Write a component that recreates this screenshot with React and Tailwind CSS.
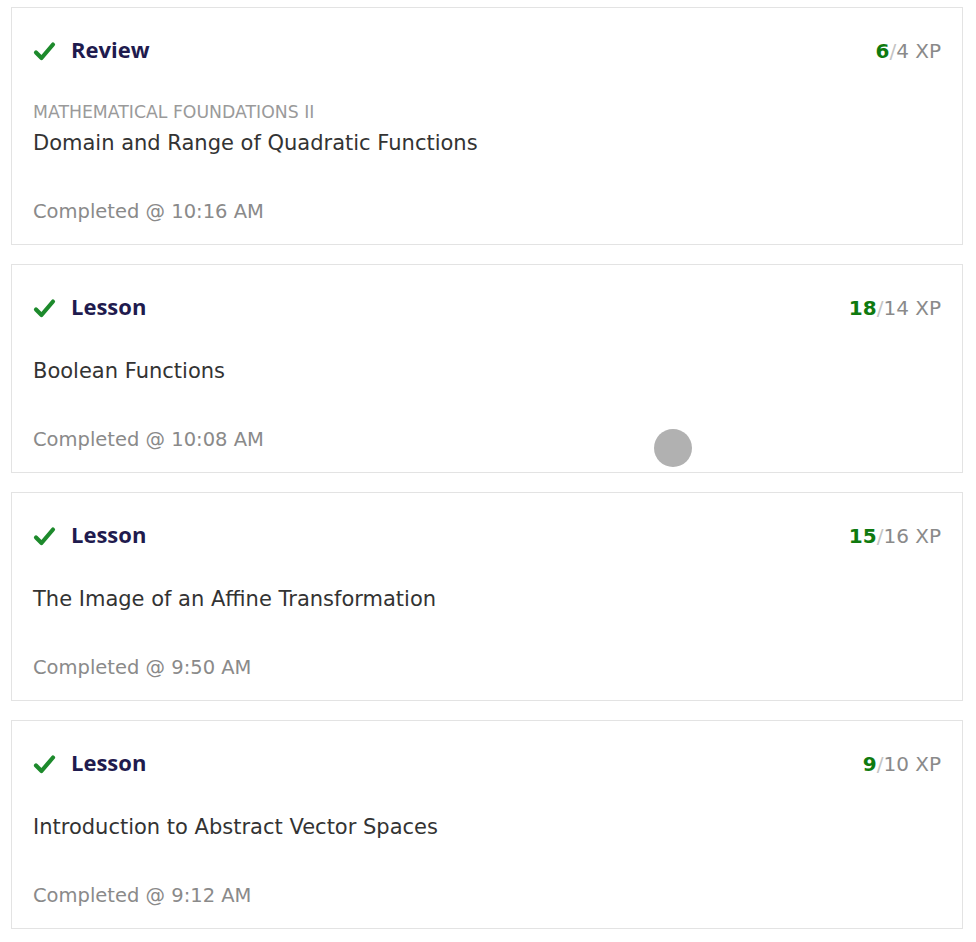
// Activity feed: completed lessons and reviews

const items = [
  {
    kind: "Review",
    earned: 6,
    total: 4,
    course: "MATHEMATICAL FOUNDATIONS II",
    title: "Domain and Range of Quadratic Functions",
    time: "10:16 AM",
  },
  { kind: "Lesson", earned: 18, total: 14, title: "Boolean Functions", time: "10:08 AM" },
  { kind: "Lesson", earned: 15, total: 16, title: "The Image of an Affine Transformation", time: "9:50 AM" },
  { kind: "Lesson", earned: 9, total: 10, title: "Introduction to Abstract Vector Spaces", time: "9:12 AM" },
];

const Check = () => (
  <svg width="23" height="20" viewBox="0 0 23 20" className="shrink-0">
    <path
      d="M3 11.5 L8.5 17 L20 3.5"
      fill="none"
      stroke="#1d8a2c"
      strokeWidth="4.2"
      strokeLinecap="round"
      strokeLinejoin="round"
    />
  </svg>
);

const ActivityCard = ({ item }) => {
  return (
    <div className="border border-[#e3e3e3] bg-white px-[21px] pt-[29px] pb-[18px]">
      {/* Header: kind + XP */}
      <div className="flex h-[28px] items-center justify-between">
        <div className="flex items-center gap-[15px]">
          <Check />
          <span className="mb-[4px] font-['Open_Sans',sans-serif] text-[22px] font-bold leading-[24px] text-[#1f1b4e]">
            {item.kind}
          </span>
        </div>
        <div className="text-[20px] leading-[28px] text-[#8a8a8a]">
          <span className="font-bold text-[#0f7a0f]">{item.earned}</span>
          <span className="text-[#c4c4c4]">/</span>
          {item.total} XP
        </div>
      </div>
      {item.course ? (
        <>
          <div className="mt-[37px] h-[20px] text-[17.3px] leading-[20px] text-[#9a9a9a]">
            {item.course}
          </div>
          <div className="mt-[7px] h-[28px] text-[21px] leading-[28px] text-[#333]">{item.title}</div>
        </>
      ) : (
        <div className="mt-[35px] h-[28px] text-[21px] leading-[28px] text-[#333]">{item.title}</div>
      )}
      <div className="mt-[41px] h-[28px] text-[19.5px] leading-[28px] text-[#8a8a8a]">
        Completed @ {item.time}
      </div>
    </div>
  );
};

const App = () => {
  return (
    <div
      className="relative min-h-[942px] bg-white pl-[11px] pt-[7px]"
      style={{ fontFamily: '"DejaVu Sans", "Liberation Sans", sans-serif' }}
    >
      <div className="flex w-[952px] flex-col gap-[19px]">
        {items.map((item, i) => (
          <ActivityCard key={i} item={item} />
        ))}
      </div>
      {/* touch indicator */}
      <div className="absolute left-[654px] top-[429px] h-[38px] w-[38px] rounded-full bg-[#b1b1b1]" />
    </div>
  );
};

export default App;
